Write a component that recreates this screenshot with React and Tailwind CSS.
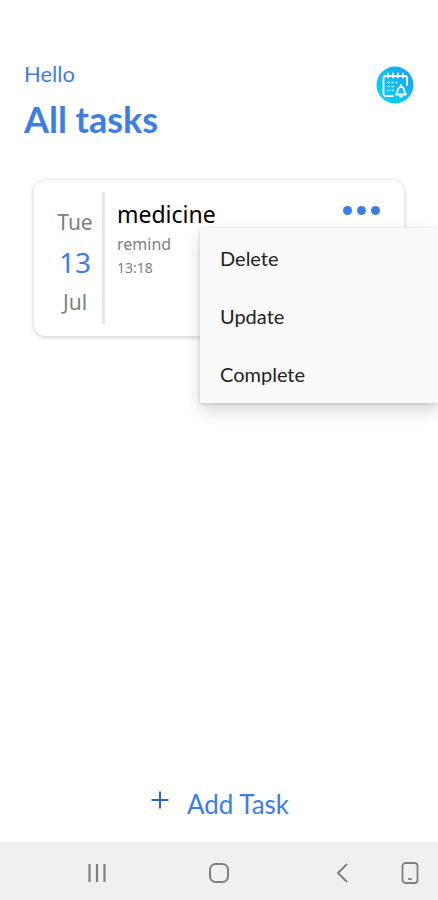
const tasks = [
  {
    id: 1,
    day: "Tue",
    date: "13",
    month: "Jul",
    title: "medicine",
    description: "remind",
    time: "13:18",
  },
];

const menuItems = ["Delete", "Update", "Complete"];

const CalendarLogo = () => (
  <svg viewBox="0 0 38 38" className="w-[38px] h-[38px]" fill="none" aria-hidden="true">
    <defs>
      <linearGradient id="logo" x1="0" y1="1" x2="1" y2="0">
        <stop offset="0" stopColor="#00dcfa" />
        <stop offset="1" stopColor="#1e9df5" />
      </linearGradient>
    </defs>
    <circle cx="19" cy="19" r="18.5" fill="url(#logo)" />
    <g stroke="#fff" strokeWidth="1.800" strokeLinecap="round" strokeLinejoin="round">
      <path d="M17 30H9.500a2 2 0 0 1-2-2V12a2 2 0 0 1 2-2h19.500a2 2 0 0 1 2 2v7" />
      <path d="M12 7.500v4M17 7.500v4M22 7.500v4M27 7.500v4" />
      <path
        d="M12 16.500h1M16 16.500h1M20 16.500h1M12 20.500h1M16 20.500h1M12 24.500h1M16 24.500h1"
        strokeWidth="1.600"
        strokeOpacity="0.75"
      />
      <path d="M20 28.500c1.500-1 1.500-2.500 1.800-4.500.3-2 1.500-3.200 3.200-3.200s2.900 1.200 3.200 3.200c.3 2 .3 3.500 1.800 4.500z" />
      <path d="M25 19v1.500M24 30.500h2" />
    </g>
  </svg>
);

const TaskMenu = () => (
  <ul className="absolute top-12 -right-[34px] w-[238px] bg-[#fafafa] pt-px font-['Lato',sans-serif] shadow-[0_8px_16px_rgba(0,0,0,0.15),0_1px_4px_rgba(0,0,0,0.15)]">
    {menuItems.map((item) => (
      <li key={item}>
        <button
          type="button"
          className="w-full px-5 py-4 text-left text-xl leading-[26px] text-[#222222]"
        >
          {item}
        </button>
      </li>
    ))}
  </ul>
);

const TaskCard = ({ task }) => (
  <article className="relative flex h-[156px] rounded-xl bg-white py-3 shadow-[0_1px_5px_rgba(0,0,0,0.22)]">
    {/* Date */}
    <div className="flex w-[71px] flex-col items-center justify-center border-r-[3px] border-[#e6e6e6] pl-[14px] pt-2 text-[21px] leading-10 text-[#808080]">
      <span>{task.day}</span>
      <span className="text-[28px] text-[#3b7ded]">{task.date}</span>
      <span>{task.month}</span>
    </div>

    {/* Details */}
    <div className="flex-1 pl-3 pt-1 text-[#808080]">
      <h2 className="text-[23px] leading-9 text-black">{task.title}</h2>
      <p className="text-base leading-6">{task.description}</p>
      <p className="text-sm leading-6">{task.time}</p>
    </div>

    <button
      type="button"
      aria-label="Task options"
      className="mr-6 mt-3 flex h-3 items-center gap-[5px]"
    >
      <span className="size-[9px] rounded-full bg-[#3d7de6]" />
      <span className="size-[9px] rounded-full bg-[#3d7de6]" />
      <span className="size-[9px] rounded-full bg-[#3d7de6]" />
    </button>

    <TaskMenu />
  </article>
);

const NavigationBar = () => (
  <nav className="grid h-[58px] grid-cols-[1fr_50px_1fr] items-center bg-[#f0f0f0] pt-[3px] text-[#808080]">
    <button type="button" aria-label="Recent apps" className="flex justify-center">
      <svg width="22" height="22" viewBox="0 0 22 22" stroke="currentColor" strokeWidth="2.200">
        <path d="M3.500 2v18M11 2v18M18.500 2v18" />
      </svg>
    </button>
    <button type="button" aria-label="Home" className="flex justify-center">
      <svg width="22" height="22" viewBox="0 0 22 22" fill="none" stroke="currentColor" strokeWidth="2">
        <rect x="2" y="2" width="18" height="18" rx="5.500" />
      </svg>
    </button>
    <div className="flex items-center justify-end gap-[50px] pr-[17px]">
      <button type="button" aria-label="Back">
        <svg width="14" height="22" viewBox="0 0 14 22" fill="none" stroke="currentColor" strokeWidth="2">
          <path d="M12 2L3 11l9 9" />
        </svg>
      </button>
      <button type="button" aria-label="Rotate screen">
        <svg width="22" height="24" viewBox="0 0 22 24" fill="none" stroke="currentColor" strokeWidth="1.800">
          <rect x="3.500" y="2" width="15" height="20" rx="3" />
          <path d="M9 18h4" />
        </svg>
      </button>
    </div>
  </nav>
);

export default function App() {
  return (
    <div className="flex min-h-screen flex-col overflow-x-hidden bg-white font-['Noto_Sans',sans-serif]">
      <header className="flex items-start justify-between px-6 pt-[60px] font-['Lato',sans-serif] text-[#3d7de6]">
        <div>
          <p className="text-[22px] leading-7">Hello</p>
          <h1 className="text-4xl font-bold leading-[62px]">All tasks</h1>
        </div>
        <div className="mt-[6px]">
          <CalendarLogo />
        </div>
      </header>

      <main className="flex-1 px-[34px] pt-[30px]">
        {tasks.map((task) => (
          <TaskCard key={task.id} task={task} />
        ))}
      </main>

      <button
        type="button"
        className="mb-5 flex items-center justify-center gap-4 font-['Lato',sans-serif] text-[26px] leading-9 text-[#3d7de6]"
      >
        <svg width="22" height="22" viewBox="0 0 22 22" stroke="#2765c4" strokeWidth="2" className="-mt-2">
          <path d="M11 2.500v17M2.500 11h17" />
        </svg>
        Add Task
      </button>

      <NavigationBar />
    </div>
  );
}
